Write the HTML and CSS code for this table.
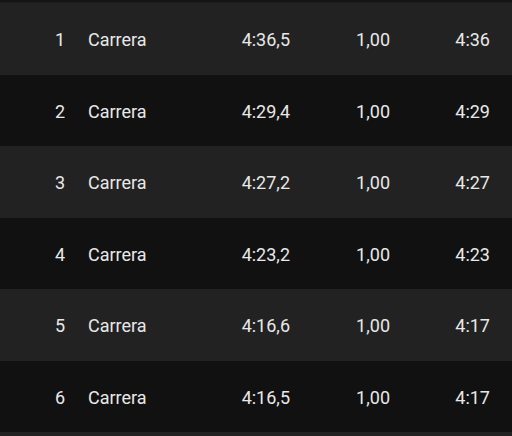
FILE: index.html
```html
<!DOCTYPE html>
<html>
<head>
<meta charset="utf-8">
<link rel="stylesheet" href="styles.css">
</head>
<body>
<div class="table">
  <div class="row odd"><span class="num">1</span><span class="name">Carrera</span><span class="val">4:36,5</span><span class="val">1,00</span><span class="val">4:36</span></div>
  <div class="row even"><span class="num">2</span><span class="name">Carrera</span><span class="val">4:29,4</span><span class="val">1,00</span><span class="val">4:29</span></div>
  <div class="row odd"><span class="num">3</span><span class="name">Carrera</span><span class="val">4:27,2</span><span class="val">1,00</span><span class="val">4:27</span></div>
  <div class="row even"><span class="num">4</span><span class="name">Carrera</span><span class="val">4:23,2</span><span class="val">1,00</span><span class="val">4:23</span></div>
  <div class="row odd"><span class="num">5</span><span class="name">Carrera</span><span class="val">4:16,6</span><span class="val">1,00</span><span class="val">4:17</span></div>
  <div class="row even"><span class="num">6</span><span class="name">Carrera</span><span class="val">4:16,5</span><span class="val">1,00</span><span class="val">4:17</span></div>
  <div class="tail"></div>
</div>
</body>
</html>
```
FILE: styles.css
```css
html, body {
  margin: 0;
  padding: 0;
  background: #121212;
}
body {
  font-family: Roboto, "Liberation Sans", sans-serif;
  font-size: 18px;
  color: #e8e8e8;
  overflow: hidden;
}
.table {
  border-top: 2px solid #151515;
  padding-top: 1px;
  background: #1c1c1c;
}
.row {
  display: grid;
  grid-template-columns: 65px 1fr 100px 100px 100px;
  padding-right: 22px;
  padding-top: 2px;
  box-sizing: border-box;
  height: 71.5px;
  align-items: center;
}
.odd { background: #222222; }
.even { background: #111111; }
.num { text-align: right; }
.name { padding-left: 23px; }
.val { text-align: right; }
.tail {
  height: 4px;
  background: #222222;
}
```
